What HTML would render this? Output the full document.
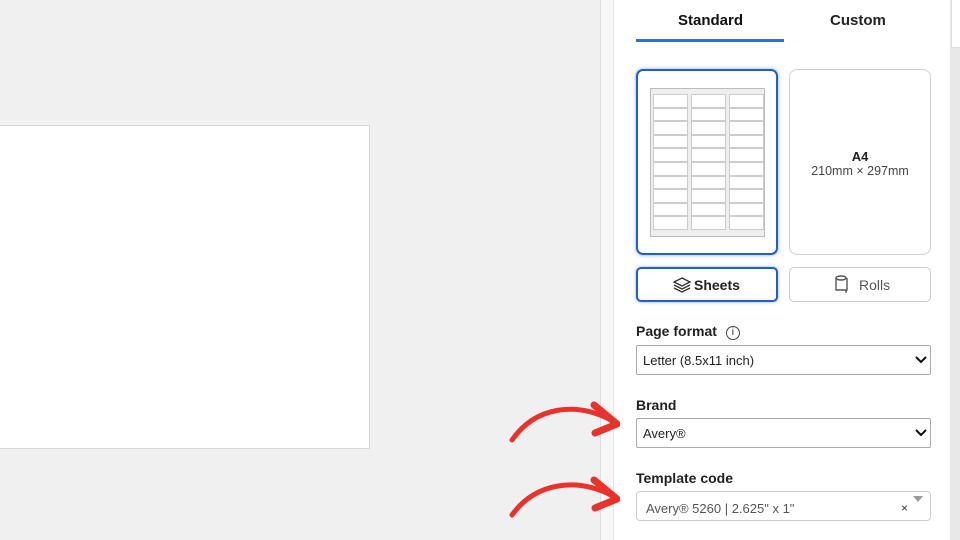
<!DOCTYPE html>
<html><head><meta charset="utf-8"><style>
*{box-sizing:border-box;margin:0;padding:0}
body{width:960px;height:540px;overflow:hidden;background:#f0f0f0;font-family:"Liberation Sans",sans-serif;position:relative}
.abs{position:absolute}
.lbl{position:absolute;left:636px;font-weight:bold;font-size:14px;color:#222}
.sel{position:absolute;left:636px;width:295px;height:30px;border:1px solid #aaa;border-radius:2px;background:#fff;font-size:13px;color:#222;padding:7px 6px}
</style></head><body>
<div class="abs" style="left:0;top:125px;width:370px;height:324px;background:#fff;border:1px solid #d8d8d8;border-left:none"></div>
<div class="abs" style="left:600px;top:0;width:14px;height:540px;background:#f7f7f7;border-left:1px solid #ddd;border-right:1px solid #e4e4e4"></div>
<div class="abs" style="left:614px;top:0;width:336px;height:540px;background:#fff"></div>
<div class="abs" style="left:950px;top:0;width:10px;height:540px;background:#e8e8e8"></div>
<div class="abs" style="left:951px;top:0;width:9px;height:48px;background:#fff;border-left:1px solid #ddd;border-bottom:1px solid #ddd"></div>
<div class="abs" style="left:678px;top:12px;font-weight:bold;font-size:15px;color:#111">Standard</div>
<div class="abs" style="left:830px;top:12px;font-weight:bold;font-size:15px;color:#222">Custom</div>
<div class="abs" style="left:636px;top:39px;width:148px;height:3px;background:#2f6fd6"></div>
<div class="abs" style="left:636px;top:69px;width:142px;height:186px;border:2px solid #1e5ed0;border-radius:7px;box-shadow:0 0 4px rgba(40,100,220,.5)"></div>
<div class="abs" style="left:650px;top:88px;width:115px;height:149px;background:#eee;border:1px solid #bbb"></div>
<div class="abs" style="left:650px;top:88px;width:115px;height:149px;display:grid;grid-template-columns:35px 35px 35px;grid-auto-rows:13.6px;column-gap:3px;padding:6px 2px 4px 3px">
<div style="border:1px solid #ccc;background:#fff"></div><div style="border:1px solid #ccc;background:#fff"></div><div style="border:1px solid #ccc;background:#fff"></div>
<div style="border:1px solid #ccc;background:#fff"></div><div style="border:1px solid #ccc;background:#fff"></div><div style="border:1px solid #ccc;background:#fff"></div>
<div style="border:1px solid #ccc;background:#fff"></div><div style="border:1px solid #ccc;background:#fff"></div><div style="border:1px solid #ccc;background:#fff"></div>
<div style="border:1px solid #ccc;background:#fff"></div><div style="border:1px solid #ccc;background:#fff"></div><div style="border:1px solid #ccc;background:#fff"></div>
<div style="border:1px solid #ccc;background:#fff"></div><div style="border:1px solid #ccc;background:#fff"></div><div style="border:1px solid #ccc;background:#fff"></div>
<div style="border:1px solid #ccc;background:#fff"></div><div style="border:1px solid #ccc;background:#fff"></div><div style="border:1px solid #ccc;background:#fff"></div>
<div style="border:1px solid #ccc;background:#fff"></div><div style="border:1px solid #ccc;background:#fff"></div><div style="border:1px solid #ccc;background:#fff"></div>
<div style="border:1px solid #ccc;background:#fff"></div><div style="border:1px solid #ccc;background:#fff"></div><div style="border:1px solid #ccc;background:#fff"></div>
<div style="border:1px solid #ccc;background:#fff"></div><div style="border:1px solid #ccc;background:#fff"></div><div style="border:1px solid #ccc;background:#fff"></div>
<div style="border:1px solid #ccc;background:#fff"></div><div style="border:1px solid #ccc;background:#fff"></div><div style="border:1px solid #ccc;background:#fff"></div>
</div>
<div class="abs" style="left:789px;top:69px;width:142px;height:186px;border:1.5px solid #d0d0d0;border-radius:8px;text-align:center;padding-top:79px;font-size:12.5px;color:#444"><b style="color:#222;font-size:13px">A4</b><br>210mm × 297mm</div>
<div class="abs" style="left:636px;top:267px;width:142px;height:35px;border:2px solid #1e5ed0;border-radius:5px;box-shadow:0 0 3px rgba(40,100,220,.5);font-weight:bold;font-size:14px;color:#222;padding-top:8px;padding-left:36px">
<svg class="abs" style="left:35px;top:8px" width="18" height="16" viewBox="0 0 18 16" fill="none" stroke="#333" stroke-width="1.4"><path d="M9 1L17 5L9 9L1 5Z"/><path d="M1 8L9 12L17 8"/><path d="M1 11L9 15L17 11"/></svg>
<span style="margin-left:20px">Sheets</span></div>
<div class="abs" style="left:789px;top:267px;width:142px;height:35px;border:1.5px solid #ccc;border-radius:5px;font-size:14px;color:#555;padding-top:9px;padding-left:69px">Rolls
<svg class="abs" style="left:44px;top:7px" width="16" height="19" viewBox="0 0 16 19" fill="none" stroke="#555" stroke-width="1.4"><ellipse cx="7" cy="3" rx="5" ry="2"/><path d="M2 3V15H13V3"/><path d="M12 15V18"/></svg></div>
<div class="lbl" style="top:323px">Page format <span style="display:inline-block;width:14px;height:14px;border:1.3px solid #444;border-radius:50%;font-size:10px;text-align:center;line-height:12px;margin-left:5px;font-weight:normal;vertical-align:1px">i</span></div>
<div class="sel" style="top:345px">Letter (8.5x11 inch)</div>
<div class="lbl" style="top:397px">Brand</div>
<div class="sel" style="top:418px">Avery®</div>
<svg class="abs" style="left:915px;top:355px" width="12" height="10"><path d="M1 2L6 7L11 2" stroke="#111" stroke-width="2" fill="none"/></svg>
<svg class="abs" style="left:915px;top:428px" width="12" height="10"><path d="M1 2L6 7L11 2" stroke="#111" stroke-width="2" fill="none"/></svg>
<div class="lbl" style="top:470px">Template code</div>
<div class="sel" style="top:491px;border-color:#ccc;border-radius:4px;color:#555;padding-left:9px;padding-top:9px">Avery® 5260 | 2.625" x 1"</div>
<div class="abs" style="left:901px;top:501px;font-size:12px;color:#333">×</div>
<svg class="abs" style="left:913px;top:496px" width="10" height="6"><path d="M0 0H10L5 6Z" fill="#999"/></svg>
<svg class="abs" style="left:505px;top:395px" width="115" height="130" viewBox="0 0 115 130">
<path d="M7 45C30 12 70 6 106 25" stroke="#e8322b" stroke-width="5" fill="none" stroke-linecap="round"/>
<path d="M89 10L112 29L90 38" stroke="#e8322b" stroke-width="7" fill="none" stroke-linejoin="round" stroke-linecap="round"/>
<path d="M7 120C30 88 70 82 106 100" stroke="#e8322b" stroke-width="5" fill="none" stroke-linecap="round"/>
<path d="M89 85L112 104L90 113" stroke="#e8322b" stroke-width="7" fill="none" stroke-linejoin="round" stroke-linecap="round"/>
</svg>
</body></html>
